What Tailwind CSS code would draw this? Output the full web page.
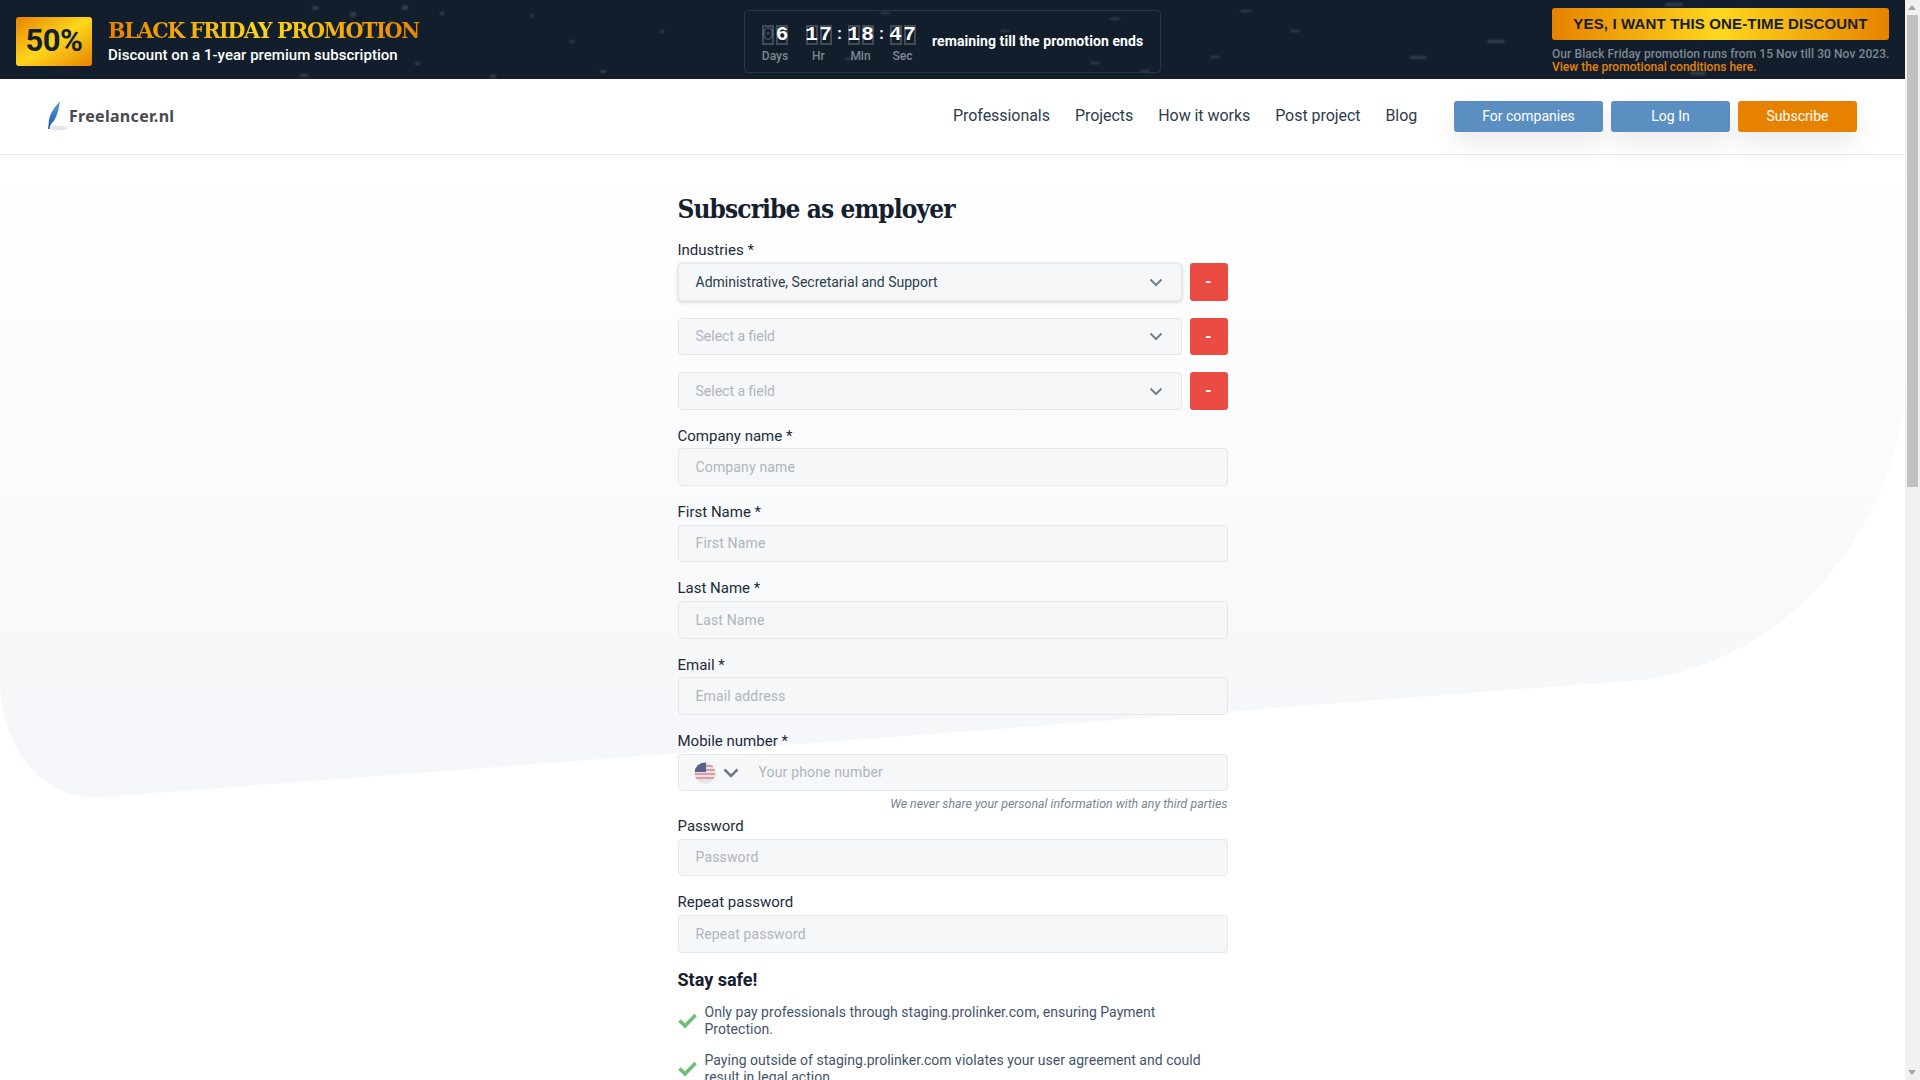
<!DOCTYPE html>
<html lang="en">
<head>
<meta charset="utf-8">
<title>Subscribe as employer</title>
<script src="https://cdn.jsdelivr.net/npm/@tailwindcss/browser@4"></script>
</head>
<body class="h-screen overflow-hidden bg-white font-['Roboto',sans-serif] text-[#1c2b3a]">
<div class="flex h-[1080px]">
<main class="relative w-[1905px] h-[1080px] overflow-hidden">

  <!-- soft page background -->
  <svg class="absolute left-0 top-[155px]" width="1905" height="660" viewBox="0 155 1905 660" aria-hidden="true">
    <defs><linearGradient id="bgshape" x1="0" y1="0" x2="0" y2="1"><stop offset="0" stop-color="#ffffff"/><stop offset="1" stop-color="#f4f6f9"/></linearGradient></defs>
    <path d="M0 155H1905V400C1890 530 1790 660 1643 680L100 797C40 800 0 745 0 680Z" fill="url(#bgshape)"/>
  </svg>

  <!-- promo banner -->
  <section class="relative flex h-[79px] bg-[#121e2c] overflow-hidden">
    <svg class="absolute inset-0" width="1905" height="79" aria-hidden="true">
      <defs><filter id="soft"><feGaussianBlur stdDeviation="1"/></filter></defs>
      <g fill="#8a99a8" opacity=".28" filter="url(#soft)">
        <rect x="312" y="6" width="7" height="4" rx="2"/><rect x="350" y="12" width="6" height="5" rx="2"/><rect x="402" y="5" width="6" height="5" rx="2"/><rect x="388" y="21" width="5" height="3" rx="1"/><rect x="440" y="12" width="4" height="3" rx="1"/>
        <rect x="300" y="74" width="8" height="3" rx="1"/><rect x="490" y="75" width="6" height="3" rx="1"/><rect x="415" y="62" width="5" height="3" rx="1"/><rect x="530" y="14" width="4" height="3" rx="1"/><rect x="570" y="40" width="4" height="3" rx="1"/>
        <rect x="600" y="70" width="6" height="3" rx="1"/><rect x="660" y="30" width="4" height="3" rx="1"/><rect x="880" y="12" width="10" height="2" rx="1"/><rect x="845" y="58" width="10" height="2" rx="1"/>
        <rect x="1000" y="30" width="10" height="2" rx="1"/><rect x="1090" y="62" width="10" height="2" rx="1"/><rect x="1110" y="18" width="10" height="2" rx="1"/><rect x="1140" y="70" width="10" height="2" rx="1"/>
        <rect x="1240" y="10" width="12" height="2" rx="1"/><rect x="1210" y="56" width="10" height="2" rx="1"/><rect x="1290" y="30" width="10" height="2" rx="1"/><rect x="1487" y="40" width="18" height="3" rx="1"/><rect x="1665" y="3" width="18" height="3" rx="1"/><rect x="1410" y="56" width="16" height="3" rx="1"/><rect x="1690" y="72" width="16" height="3" rx="1"/>
      </g>
    </svg>
    <div class="relative ml-4 mt-[17px] flex h-[49px] w-[76px] items-center justify-center rounded-[3px] bg-linear-to-br from-[#e68200] via-[#fdd71c] to-[#e68200] text-[31px] font-bold tracking-[-0.5px] text-[#14202e]">50%</div>
    <div class="relative ml-4 mt-[16px] w-[330px]">
      <div class="w-[312px] bg-linear-to-r from-[#e68200] via-[#fdd71c] to-[#e68200] bg-clip-text font-['DejaVu_Serif',serif] text-[23px] font-bold font-stretch-condensed leading-[28px] tracking-[-1.32px] whitespace-nowrap text-transparent">BLACK FRIDAY PROMOTION</div>
      <div class="mt-[1px] text-[15px] font-medium leading-[20px] tracking-[.03px] text-white whitespace-nowrap">Discount on a 1-year premium subscription</div>
    </div>
    <div class="relative ml-[306px] mt-[10px] flex h-[63px] w-[417px] items-start rounded-[4px] border border-[#2b3644] pl-[17px] pt-[14px]">
      <div class="flex w-[26px] flex-col items-center">
        <div class="flex gap-[2px]">
          <span class="flex h-[20px] w-[12px] items-center justify-center border-2 border-white/20 font-['Liberation_Mono',monospace] text-[21px] text-white/20">0</span>
          <span class="flex h-[20px] w-[12px] items-center justify-center border-2 border-white/20 font-['Liberation_Mono',monospace] text-[21px] font-bold text-white">6</span>
        </div>
        <span class="mt-[4px] text-[12px] font-medium leading-[14px] text-[#7f8790]">Days</span>
      </div>
      <div class="ml-[17px] flex w-[27px] flex-col items-center">
        <div class="flex gap-[2px]">
          <span class="flex h-[20px] w-[12px] items-center justify-center border-2 border-white/20 font-['Liberation_Mono',monospace] text-[21px] font-bold text-white">1</span>
          <span class="flex h-[20px] w-[12px] items-center justify-center border-2 border-white/20 font-['Liberation_Mono',monospace] text-[21px] font-bold text-white">7</span>
        </div>
        <span class="mt-[4px] text-[12px] font-medium leading-[14px] text-[#7f8790]">Hr</span>
      </div>
      <span class="w-[15px] text-center text-[16px] font-bold leading-[18px] text-white">:</span>
      <div class="flex w-[27px] flex-col items-center">
        <div class="flex gap-[2px]">
          <span class="flex h-[20px] w-[12px] items-center justify-center border-2 border-white/20 font-['Liberation_Mono',monospace] text-[21px] font-bold text-white">1</span>
          <span class="flex h-[20px] w-[12px] items-center justify-center border-2 border-white/20 font-['Liberation_Mono',monospace] text-[21px] font-bold text-white">8</span>
        </div>
        <span class="mt-[4px] text-[12px] font-medium leading-[14px] text-[#7f8790]">Min</span>
      </div>
      <span class="w-[15px] text-center text-[16px] font-bold leading-[18px] text-white">:</span>
      <div class="flex w-[27px] flex-col items-center">
        <div class="flex gap-[2px]">
          <span class="flex h-[20px] w-[12px] items-center justify-center border-2 border-white/20 font-['Liberation_Mono',monospace] text-[21px] font-bold text-white">4</span>
          <span class="flex h-[20px] w-[12px] items-center justify-center border-2 border-white/20 font-['Liberation_Mono',monospace] text-[21px] font-bold text-white">7</span>
        </div>
        <span class="mt-[4px] text-[12px] font-medium leading-[14px] text-[#7f8790]">Sec</span>
      </div>
      <span class="ml-[16px] mt-[7px] text-[14px] font-bold leading-[18px] tracking-[.08px] text-white whitespace-nowrap">remaining till the promotion ends</span>
    </div>
    <div class="relative ml-auto mr-[16px] mt-[8px] w-[337px]">
      <div class="flex h-[32px] items-center justify-center rounded-[3px] bg-linear-to-r from-[#e68200] via-[#fdd71c] to-[#e68200] font-['Liberation_Sans',sans-serif] text-[15px] font-bold tracking-[.15px] text-[#14202e] whitespace-nowrap">YES, I WANT THIS ONE-TIME DISCOUNT</div>
      <div class="mt-[8px] text-[12px] font-medium leading-[13px] tracking-[.08px] text-[#7f8790] whitespace-nowrap">Our Black Friday promotion runs from 15 Nov till 30 Nov 2023.</div>
      <div class="text-[12px] font-medium leading-[13px] tracking-[.03px] text-[#e68200] whitespace-nowrap">View the promotional conditions here.</div>
    </div>
  </section>

  <!-- site header -->
  <header class="relative flex h-[76px] items-center border-b border-[#e3e9ec]">
    <svg class="ml-[46px] mb-[2px]" width="22" height="32" viewBox="0 0 22 32" aria-hidden="true">
      <defs><linearGradient id="quill" x1="0" y1="0" x2="0" y2="1"><stop offset="0" stop-color="#5aa0dc"/><stop offset="1" stop-color="#1458a8"/></linearGradient></defs>
      <ellipse cx="12" cy="28" rx="10" ry="2.6" fill="#e5e7e9"/>
      <path d="M14 1C9 7 4 13 3 20C2.600 23 2.600 26 2 29L3.400 29C4 26 4.600 24 6 23C10 20 13 9 14 1Z" fill="url(#quill)"/>
    </svg>
    <span class="ml-[1px] mb-[2px] font-['Noto_Sans',sans-serif] text-[16px] font-bold tracking-[.3px] text-[#474b4f]">Freelancer.nl</span>
    <nav class="absolute left-[953px] top-0 flex h-[74px] items-center gap-[25px] text-[16px] tracking-[-0.05px] text-[#2d3c4c]">
      <span>Professionals</span><span>Projects</span><span>How it works</span><span>Post project</span><span>Blog</span>
    </nav>
    <div class="absolute left-[1454px] top-[22px] flex gap-[8px] text-[14px] text-white">
      <span class="flex h-[31px] w-[149px] items-center justify-center rounded-[3px] bg-[#5b8fc1] shadow-[0_12px_24px_rgba(0,0,0,.08)]">For companies</span>
      <span class="flex h-[31px] w-[119px] items-center justify-center rounded-[3px] bg-[#5b8fc1] shadow-[0_12px_24px_rgba(0,0,0,.08)]">Log In</span>
      <span class="flex h-[31px] w-[119px] items-center justify-center rounded-[3px] bg-[#e68200] shadow-[0_12px_24px_rgba(0,0,0,.08)]">Subscribe</span>
    </div>
  </header>

  <!-- form -->
  <form class="relative mx-auto w-[550px] pt-[36px]">
    <h1 class="font-['DejaVu_Serif',serif] text-[26px] font-bold font-stretch-condensed leading-[36px] tracking-[-0.9px] text-[#14202e]">Subscribe as employer</h1>

    <label class="mt-[11px] block h-[24px] text-[15px] leading-[24px]">Industries *</label>
    <div class="mt-px flex h-[38px] gap-[8px]">
      <div class="flex flex-1 items-center justify-between rounded-[4px] border border-[#e4e7eb] bg-[#f5f7f9] pl-[17px] pr-[18px] text-[14px] text-[#2d3c4c] shadow-[0_1px_4px_rgba(0,0,0,.18)]">Administrative, Secretarial and Support
        <svg width="14" height="9" viewBox="0 0 14 9" fill="none" stroke="#72808f" stroke-width="2"><path d="M1.5 1.5 7 7l5.500-5.500"/></svg></div>
      <span class="flex w-[38px] items-center justify-center rounded-[3px] bg-[#ea4c44] text-[16px] font-bold text-white">-</span>
    </div>
    <div class="mt-[17px] flex h-[37px] gap-[8px]">
      <div class="flex flex-1 items-center justify-between rounded-[4px] border border-[#e4e7eb] bg-[#f5f7f9] pl-[17px] pr-[18px] text-[14px] text-[#aeb5bd]">Select a field
        <svg width="14" height="9" viewBox="0 0 14 9" fill="none" stroke="#72808f" stroke-width="2"><path d="M1.5 1.5 7 7l5.500-5.500"/></svg></div>
      <span class="flex w-[38px] items-center justify-center rounded-[3px] bg-[#ea4c44] text-[16px] font-bold text-white">-</span>
    </div>
    <div class="mt-[17px] flex h-[38px] gap-[8px]">
      <div class="flex flex-1 items-center justify-between rounded-[4px] border border-[#e4e7eb] bg-[#f5f7f9] pl-[17px] pr-[18px] text-[14px] text-[#aeb5bd]">Select a field
        <svg width="14" height="9" viewBox="0 0 14 9" fill="none" stroke="#72808f" stroke-width="2"><path d="M1.5 1.5 7 7l5.500-5.500"/></svg></div>
      <span class="flex w-[38px] items-center justify-center rounded-[3px] bg-[#ea4c44] text-[16px] font-bold text-white">-</span>
    </div>

    <label class="mt-[14px] block h-[24px] text-[15px] leading-[24px]">Company name *</label>
    <div class="flex h-[38px] items-center rounded-[4px] border border-[#e4e7eb] bg-[#f5f7f9] pl-[17px] text-[14px] tracking-[.15px] text-[#aeb5bd]">Company name</div>

    <label class="mt-[14px] block h-[24px] text-[15px] leading-[24px]">First Name *</label>
    <div class="mt-px flex h-[37px] items-center rounded-[4px] border border-[#e4e7eb] bg-[#f5f7f9] pl-[17px] text-[14px] tracking-[.15px] text-[#aeb5bd]">First Name</div>

    <label class="mt-[14px] block h-[24px] text-[15px] leading-[24px]">Last Name *</label>
    <div class="mt-px flex h-[38px] items-center rounded-[4px] border border-[#e4e7eb] bg-[#f5f7f9] pl-[17px] text-[14px] tracking-[.15px] text-[#aeb5bd]">Last Name</div>

    <label class="mt-[14px] block h-[24px] text-[15px] leading-[24px]">Email *</label>
    <div class="flex h-[38px] items-center rounded-[4px] border border-[#e4e7eb] bg-[#f5f7f9] pl-[17px] text-[14px] tracking-[.15px] text-[#aeb5bd]">Email address</div>

    <label class="mt-[14px] block h-[24px] text-[15px] leading-[24px]">Mobile number *</label>
    <div class="mt-px flex h-[37px] items-center rounded-[4px] border border-[#e4e7eb] bg-[#f5f7f9] pl-[15px] text-[14px] tracking-[.15px] text-[#aeb5bd]">
      <svg width="22" height="22" viewBox="0 0 22 22" aria-hidden="true">
        <defs><clipPath id="flagclip"><circle cx="11" cy="11" r="10.500"/></clipPath></defs>
        <g clip-path="url(#flagclip)">
          <rect width="22" height="22" fill="#e3e4e6"/>
          <path d="M0 3h22v2H0zM0 7h22v2H0zM0 11h22v2H0zM0 15h22v2H0z" fill="#e39a9e"/>
          <rect width="12" height="10" fill="#5a5f8e"/>
        </g>
      </svg>
      <svg class="ml-[7px]" width="16" height="10" viewBox="0 0 16 10" fill="none" stroke="#6b7a8f" stroke-width="2.500"><path d="M1.500 1.500 8 8l6.500-6.500"/></svg>
      <span class="ml-[20px]">Your phone number</span>
    </div>
    <p class="mt-[4px] h-[18px] text-right text-[12.400px] italic leading-[18px] text-[#7a8592]">We never share your personal information with any third parties</p>

    <label class="mt-[1px] block h-[24px] text-[15px] leading-[24px]">Password</label>
    <div class="mt-px flex h-[37px] items-center rounded-[4px] border border-[#e4e7eb] bg-[#f5f7f9] pl-[17px] text-[14px] tracking-[.15px] text-[#aeb5bd]">Password</div>

    <label class="mt-[14px] block h-[24px] text-[15px] leading-[24px]">Repeat password</label>
    <div class="mt-px flex h-[38px] items-center rounded-[4px] border border-[#e4e7eb] bg-[#f5f7f9] pl-[17px] text-[14px] tracking-[.15px] text-[#aeb5bd]">Repeat password</div>

    <h2 class="mt-[14px] text-[18px] font-bold leading-[26px] text-[#14202e]">Stay safe!</h2>
    <ul class="mt-[11px] text-[14px] leading-[17px] tracking-[.03px] text-[#44546a]">
      <li class="flex items-center gap-[8px]">
        <svg class="mb-[2px] shrink-0" width="19" height="17" viewBox="0 0 19 17" fill="none" stroke="#6cc070" stroke-width="3.500"><path d="M1.500 8.500 7 14 17.500 3"/></svg>
        <span class="pr-[40px]">Only pay professionals through staging.prolinker.com, ensuring Payment Protection.</span>
      </li>
      <li class="mt-[14px] flex items-center gap-[8px]">
        <svg class="mb-[2px] shrink-0" width="19" height="17" viewBox="0 0 19 17" fill="none" stroke="#6cc070" stroke-width="3.500"><path d="M1.500 8.500 7 14 17.500 3"/></svg>
        <span>Paying outside of staging.prolinker.com violates your user agreement and could result in legal action.</span>
      </li>
    </ul>
  </form>
</main>

<!-- scrollbar -->
<aside class="relative h-[1080px] w-[15px] shrink-0 bg-[#f1f1f1]" aria-hidden="true">
  <span class="absolute left-[3px] top-[5px] h-0 w-0 border-x-[4px] border-b-[5px] border-x-transparent border-b-[#a3a3a3]"></span>
  <span class="absolute left-[2px] top-[15px] h-[472px] w-[11px] bg-[#c1c1c1]"></span>
  <span class="absolute bottom-[5px] left-[3px] h-0 w-0 border-x-[4px] border-t-[5px] border-x-transparent border-t-[#a3a3a3]"></span>
</aside>
</div>
</body>
</html>
